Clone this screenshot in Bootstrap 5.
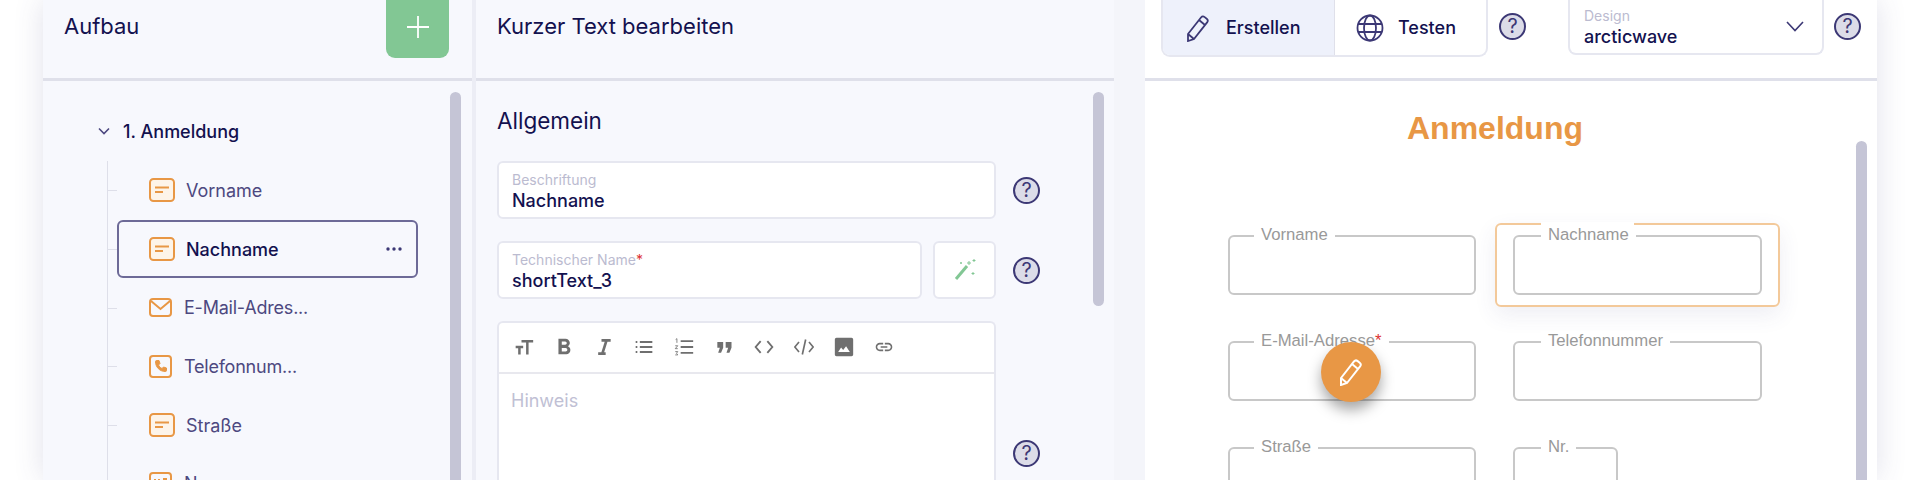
<!DOCTYPE html>
<html lang="de">
<head>
<meta charset="utf-8">
<title>Formular-Editor</title>
<link href="https://cdn.jsdelivr.net/npm/bootstrap@5.3.0/dist/css/bootstrap.min.css" rel="stylesheet">
<style>
html,body{height:480px;overflow:hidden;background:#fff;font-family:Inter,"Liberation Sans",sans-serif;color:#13114f}
.shell{margin-left:43px;width:1834px;height:480px;box-shadow:0 0 28px rgba(70,70,130,.16)}
.pane-a{width:433px;background:#f7f8fd;border-right:4px solid #ecedf5;flex:none}
.pane-b{width:638px;background:#f7f8fd;flex:none}
.pane-gap{width:31px;background:#f4f5fa;flex:none}
.pane-c{width:732px;background:#fff;flex:none}
.head{height:81px;border-bottom:3px solid #dfe0ea;flex:none}
.head-title{font-size:22px;line-height:26px;padding-top:13px;font-weight:400}
.add-btn{width:63px;height:58px;background:#82c794;border-radius:0 0 9px 9px;margin-right:23px;border:0;padding:0 0 4px}
.thumb{width:11px;background:#c5c5d6;border-radius:6px 6px 0 0;margin-top:11px;flex:none}
.tree-title{height:40px;margin-top:30px;padding-left:55px;font-size:18px;font-weight:500;gap:13px}
.tree-list{margin:10px 0 0 64px;border-left:1px solid #dedfe9;list-style:none;padding:0}
.tree-row{height:58.7px;margin-left:9px;width:301px;padding-left:32px;font-size:18px;color:#4d4880;position:relative;gap:11px}
.tree-row::before{content:"";position:absolute;left:-9px;top:50%;width:9px;height:1px;background:#dedfe9}
.tree-row.on{color:#13114f;font-weight:500;outline:2px solid #6d6a97;outline-offset:-2px;border-radius:6px}
.tree-row.wide{gap:12px;letter-spacing:-.22px}
.dots{margin-left:auto;margin-right:16px}
.form-side{width:600px;padding-left:21px}
.sec-title{font-size:22.5px;line-height:26px;margin:27px 0 0;font-weight:400}
.fbox{background:#fff;border:2px solid #e6e7f0;border-radius:6px;height:58px;padding:9px 13px 0}
.fbox-cap{font-size:14px;line-height:16px;color:#bbbbd0;display:block}
.fbox-val{font-size:18px;line-height:26px;font-weight:500;display:block}
.req{color:#d33}
.hlp{width:27px;height:27px;border-radius:50%;background:#dcdce8;border:2px solid #3c3875;color:#3c3875;font-size:20px;line-height:23px;text-align:center;flex:none}
.wand{width:63px;height:58px;background:#fff;border:2px solid #e6e7f0;border-radius:6px;flex:none}
.editor{width:499px;background:#fff;border:2px solid #e6e7f0;border-bottom:0;border-radius:6px 6px 0 0;height:220px;flex:none}
.tools{height:51px;border-bottom:2px solid #e8e8ee;padding:0 0 2px 15px;gap:20px;color:#6f6f6f}
.tools svg{width:20px;height:20px;flex:none}
.hint{font-size:18px;color:#c0c0d4;padding:13px 12px}
.seg{width:327px;height:57px;background:#fff;border:2px solid #e6e7f0;border-top:0;border-radius:0 0 9px 9px;overflow:hidden;font-size:18px;font-weight:500}
.seg-on{width:172px;background:#eef1fb;border-right:1px solid #dfe0ea;padding-left:22px;gap:15px}
.seg-off{flex:1;padding-left:21px;gap:14px}
.design{width:256px;height:55px;background:#fff;border:2px solid #e6e7f0;border-top:0;border-radius:0 0 8px 8px;margin-left:42px;padding:5px 18px 0 14px}
.design-cap{font-size:14px;line-height:16px;color:#bbbbd0}
.design-val{font-size:18px;line-height:26px;font-weight:500}
.design svg{margin-top:-5px}
.stage{width:700px;flex:none}
.stage-title{font-family:"Liberation Sans",sans-serif;font-weight:700;font-size:32px;line-height:40px;color:#e89745;text-align:center;margin:27px 0 0}
.grid-form{display:grid;grid-template-columns:248px 249px;column-gap:37px;row-gap:46px;margin:87px 0 0 83px;font-family:"Liberation Sans",sans-serif}
.fld{height:60px;border:2px solid #c8c8c8;border-radius:6px;position:relative;background:#fff}
.fld-short{width:105px}
.fld-cap{position:absolute;left:24px;top:-12px;background:#fff;padding:0 7px;font-size:16.7px;line-height:20px;color:#999}
.fld:nth-child(even) .fld-cap{left:26px}
.fld-mark{position:absolute;inset:-14px -20px;border:2px solid #f3c99a;border-radius:6px;box-shadow:0 8px 22px rgba(70,70,130,.09)}
.fld-notch{position:absolute;left:26px;top:-15px;width:93px;height:4px;background:#fff}
.fab{position:absolute;left:1321px;top:342px;width:60px;height:60px;border-radius:50%;background:#e89745;box-shadow:0 8px 14px rgba(0,0,0,.35)}
</style>
</head>
<body>
<div class="shell d-flex">
  <section class="pane-a d-flex flex-column">
    <div class="head d-flex justify-content-between ps-4 pe-0">
      <div class="head-title" style="margin-left:-3px">Aufbau</div>
      <button class="add-btn d-flex align-items-center justify-content-center" aria-label="Hinzufügen"><svg width="24" height="24" viewBox="0 0 24 24" fill="none" stroke="#fff" stroke-width="1.8"><path d="M12 1v22M1 12h22"/></svg></button>
    </div>
    <div class="d-flex flex-grow-1 overflow-hidden">
      <div class="flex-grow-1">
        <div class="tree-title d-flex align-items-center">
          <svg width="12" height="8" viewBox="0 0 12 8" fill="none" stroke="#4d4880" stroke-width="1.6"><path d="M1 1.5l5 5 5-5"/></svg>
          <span>1. Anmeldung</span>
        </div>
        <ul class="tree-list">
          <li class="tree-row d-flex align-items-center"><svg width="26" height="24" viewBox="0 0 26 24"><rect x="1" y="1" width="24" height="22" rx="3.5" fill="#fdf4e9" stroke="#e89745" stroke-width="2"/><path d="M6 9.5h14M6 14h8" stroke="#e89745" stroke-width="2"/></svg><span>Vorname</span></li>
          <li class="tree-row on d-flex align-items-center"><svg width="26" height="24" viewBox="0 0 26 24"><rect x="1" y="1" width="24" height="22" rx="3.5" fill="#fdf4e9" stroke="#e89745" stroke-width="2"/><path d="M6 9.5h14M6 14h8" stroke="#e89745" stroke-width="2"/></svg><span>Nachname</span><svg class="dots" width="16" height="4" viewBox="0 0 16 4" fill="#3c3875"><circle cx="2" cy="2" r="1.7"/><circle cx="8" cy="2" r="1.7"/><circle cx="14" cy="2" r="1.7"/></svg></li>
          <li class="tree-row wide d-flex align-items-center"><svg width="23" height="19" viewBox="0 0 23 19" fill="none" stroke="#e89745" stroke-width="2"><rect x="1" y="1" width="21" height="17" rx="3"/><path d="M2 3l9.500 8L21 3"/></svg><span>E-Mail-Adres...</span></li>
          <li class="tree-row wide d-flex align-items-center"><svg width="23" height="23" viewBox="0 0 23 23" fill="none" stroke="#e89745" stroke-width="2"><rect x="1" y="1" width="21" height="21" rx="3"/><path d="M7.500 5.500h2.500l1 3-1.500 1.500c.6 1.500 1.700 2.600 3.500 3.500l1.500-1.500 3 1v2.500c0 .6-.5 1-1 1C10.500 16.500 6.500 12 6.500 6.500c0-.5.500-1 1-1z" fill="#e89745" stroke-width="1"/></svg><span>Telefonnum...</span></li>
          <li class="tree-row d-flex align-items-center"><svg width="26" height="24" viewBox="0 0 26 24"><rect x="1" y="1" width="24" height="22" rx="3.500" fill="#fdf4e9" stroke="#e89745" stroke-width="2"/><path d="M6 9.500h14M6 14h8" stroke="#e89745" stroke-width="2"/></svg><span>Straße</span></li>
          <li class="tree-row wide d-flex align-items-center"><svg width="23" height="23" viewBox="0 0 23 23" fill="none" stroke="#e89745" stroke-width="2"><rect x="1" y="1" width="21" height="21" rx="3"/><path d="M6 7v6M10 7v6M14 7h4"/></svg><span>Nr.</span></li>
        </ul>
      </div>
      <div class="thumb" style="margin-right:11px"></div>
    </div>
  </section>

  <section class="pane-b d-flex flex-column">
    <div class="head ps-0"><div class="head-title" style="padding-left:21px">Kurzer Text bearbeiten</div></div>
    <div class="d-flex flex-grow-1 overflow-hidden justify-content-between">
      <div class="form-side">
        <h2 class="sec-title">Allgemein</h2>
        <div class="d-flex align-items-center" style="margin-top:27px">
          <div class="fbox" style="width:499px"><span class="fbox-cap">Beschriftung</span><span class="fbox-val">Nachname</span></div>
          <div class="hlp" style="margin-left:17px">?</div>
        </div>
        <div class="d-flex align-items-center" style="margin-top:22px">
          <div class="fbox" style="width:425px"><span class="fbox-cap">Technischer Name<span class="req">*</span></span><span class="fbox-val">shortText_3</span></div>
          <div class="wand d-flex align-items-center justify-content-center" style="margin-left:11px"><svg width="26" height="26" viewBox="0 0 26 26" fill="none" stroke="#82c794"><path d="M4 22L15 9" stroke-width="3"/><path d="M17 4v4M15 6h4M22 2v3M20.500 3.500h3M21 15v3M19.500 16.500h3M9 5v2M8 6h2" stroke-width="1"/></svg></div>
          <div class="hlp" style="margin-left:17px">?</div>
        </div>
        <div class="d-flex" style="margin-top:22px">
          <div class="editor">
            <div class="tools d-flex align-items-center">
              <svg viewBox="0 0 24 24" fill="none" stroke="currentColor" stroke-width="3"><path d="M2 12h9M6.500 12v9M9 5h14M16 5v16"/></svg>
              <svg viewBox="3.500 2.500 17 18" fill="currentColor"><path d="M15.600 10.790c.97-.67 1.650-1.770 1.650-2.790 0-2.260-1.750-4-4-4H7v14h7.040c2.090 0 3.710-1.700 3.710-3.790 0-1.520-.86-2.820-2.150-3.420zM10 6.500h3c.83 0 1.500.67 1.500 1.500s-.67 1.500-1.500 1.500h-3v-3zm3.500 9H10v-3h3.500c.83 0 1.500.67 1.500 1.500s-.67 1.500-1.500 1.500z"/></svg>
              <svg viewBox="0 0 24 24" fill="none" stroke="currentColor" stroke-width="3.200"><path d="M9 4h11M15 4L10 20M5 20h9"/></svg>
              <svg viewBox="0 0 24 24" fill="none" stroke="currentColor" stroke-width="2.200"><path d="M7 6h15M7 12h15M7 18h15"/><path d="M2 6h2M2 12h2M2 18h2" stroke-width="2.600"/></svg>
              <svg viewBox="0 0 24 24" fill="none" stroke="currentColor" stroke-width="2.200"><path d="M8 5h15M8 12h15M8 19h15"/><path d="M2 3l1.500-1v5M1.500 10.500h3l-3 3.500h3M1.500 17.500h3l-1.500 2 1.500 2h-3" stroke-width="1"/></svg>
              <svg viewBox="0 0 24 24" fill="currentColor"><path d="M4 6h7v7l-2.500 6H5l2-6H4zM14 6h7v7l-2.500 6H15l2-6h-3z"/></svg>
              <svg viewBox="0 0 24 24" fill="none" stroke="currentColor" stroke-width="2.200"><path d="M8 5l-6 7 6 7M16 5l6 7-6 7"/></svg>
              <svg viewBox="0 0 24 24" fill="none" stroke="currentColor" stroke-width="2"><path d="M6 6l-5 6 5 6M18 6l5 6-5 6M14 3l-4 18"/></svg>
              <svg viewBox="0 0 24 24" fill="currentColor"><path d="M23 21V3c0-1.100-.9-2-2-2H3c-1.100 0-2 .9-2 2v18c0 1.100.9 2 2 2h18c1.100 0 2-.9 2-2zM8.500 12.500l2.500 3L14.500 11l4.500 7H5l3.500-5.500z"/></svg>
              <svg viewBox="0 0 24 24" fill="currentColor"><path d="M3.900 12c0-1.710 1.390-3.100 3.100-3.100h4V7H7c-2.760 0-5 2.240-5 5s2.240 5 5 5h4v-1.900H7c-1.710 0-3.100-1.390-3.100-3.100zM8 13h8v-2H8v2zm9-6h-4v1.900h4c1.710 0 3.100 1.390 3.100 3.100s-1.390 3.100-3.100 3.100h-4V17h4c2.760 0 5-2.240 5-5s-2.240-5-5-5z"/></svg>
            </div>
            <div class="hint">Hinweis</div>
          </div>
          <div class="hlp" style="margin:119px 0 0 17px">?</div>
        </div>
      </div>
      <div class="thumb" style="height:214px;border-radius:6px;margin-right:10px"></div>
    </div>
  </section>

  <div class="pane-gap"></div>

  <section class="pane-c d-flex flex-column">
    <div class="head d-flex align-items-start" style="padding-left:16px">
      <div class="seg d-flex">
        <div class="seg-on d-flex align-items-center"><svg width="26" height="28" viewBox="0 0 26 28" fill="none" stroke="#3c3875" stroke-width="1.800"><path d="M3 20L16 3.500c1-1.200 2.500-1.300 3.700-.4l2 1.600c1.200 1 1.300 2.500.4 3.700L9 25l-6 2zM14 6l6 5M3 20l6 5"/></svg><span>Erstellen</span></div>
        <div class="seg-off d-flex align-items-center"><svg width="28" height="28" viewBox="0 0 28 28" fill="none" stroke="#3c3875" stroke-width="1.800"><circle cx="14" cy="14" r="12.500"/><ellipse cx="14" cy="14" rx="6" ry="12.500"/><path d="M2 10h24M2 18h24"/></svg><span>Testen</span></div>
      </div>
      <div class="hlp" style="margin:13px 0 0 11px">?</div>
      <div class="design d-flex align-items-center justify-content-between">
        <div><div class="design-cap">Design</div><div class="design-val">arcticwave</div></div>
        <svg width="18" height="11" viewBox="0 0 18 11" fill="none" stroke="#3c3875" stroke-width="1.600"><path d="M1 1l8 8.500L17 1"/></svg>
      </div>
      <div class="hlp" style="margin:13px 0 0 10px">?</div>
    </div>
    <div class="d-flex flex-grow-1 overflow-hidden justify-content-between">
      <div class="stage">
        <h1 class="stage-title">Anmeldung</h1>
        <div class="grid-form">
          <div class="fld"><span class="fld-cap">Vorname</span></div>
          <div class="fld"><span class="fld-mark"></span><span class="fld-notch"></span><span class="fld-cap">Nachname</span></div>
          <div class="fld"><span class="fld-cap">E-Mail-Adresse<span class="req">*</span></span></div>
          <div class="fld"><span class="fld-cap">Telefonnummer</span></div>
          <div class="fld"><span class="fld-cap">Straße</span></div>
          <div class="fld fld-short"><span class="fld-cap">Nr.</span></div>
        </div>
      </div>
      <div class="thumb" style="margin-top:60px;margin-right:10px"></div>
    </div>
  </section>
</div>
<div class="fab d-flex align-items-center justify-content-center"><svg width="26" height="28" viewBox="0 0 26 28" fill="none" stroke="#fff" stroke-width="2"><path d="M3 20L16 3.500c1-1.200 2.500-1.300 3.700-.4l2 1.600c1.200 1 1.300 2.500.4 3.700L9 25l-6 2zM14 6l6 5M3 20l6 5"/></svg></div>
</body>
</html>
